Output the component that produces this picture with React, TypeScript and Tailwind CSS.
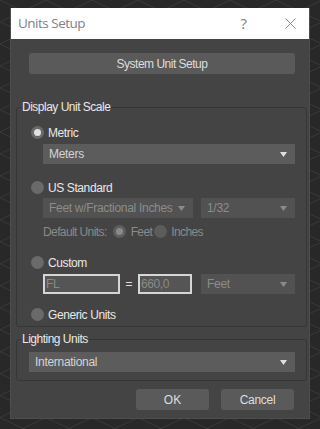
import React from "react";

const font = { fontFamily: '"Liberation Sans", Arial, sans-serif' };

function Radio({ checked, disabled }: { checked?: boolean; disabled?: boolean }) {
  if (checked) {
    return (
      <span
        className={`flex h-[13px] w-[13px] shrink-0 items-center justify-center rounded-full ${
          disabled ? "bg-[#5e5e5e]" : "bg-[#6a6a6a]"
        }`}
      >
        <span className={`h-[7px] w-[7px] rounded-full ${disabled ? "bg-[#8a8a8a]" : "bg-[#e2e2e2]"}`} />
      </span>
    );
  }
  return <span className={`block h-[13px] w-[13px] shrink-0 rounded-full ${disabled ? "bg-[#5c5c5c]" : "bg-[#6a6a6a]"}`} />;
}

function Arrow({ disabled }: { disabled?: boolean }) {
  return (
    <svg width="7" height="5" viewBox="0 0 7 5" className="shrink-0">
      <path d="M0 0 L7 0 L3.5 5 Z" fill={disabled ? "#8a8a8a" : "#e0e0e0"} />
    </svg>
  );
}

function Dropdown({ label, disabled, className }: { label: string; disabled?: boolean; className?: string }) {
  return (
    <div
      className={`flex h-[20px] items-center justify-between pl-[6px] pr-[8px] text-[12px] tracking-[-0.3px] ${
        disabled ? "bg-[#525252] text-[#8c8c8c]" : "bg-[#5c5c5c] text-[#d4d4d4]"
      } ${className ?? ""}`}
    >
      <span>{label}</span>
      <Arrow disabled={disabled} />
    </div>
  );
}

function Background() {
  const lines: React.ReactNode[] = [];
  for (let i = -20; i < 30; i++) {
    const x = i * 46;
    lines.push(<line key={"a" + i} x1={x} y1={0} x2={x + 900} y2={430} stroke="#3a3a3a" strokeWidth="1" />);
    lines.push(<line key={"b" + i} x1={x} y1={0} x2={x - 900} y2={430} stroke="#3a3a3a" strokeWidth="1" />);
  }
  return (
    <svg className="absolute inset-0" width="320" height="429" viewBox="0 0 320 429">
      {lines}
    </svg>
  );
}

export default function App() {
  return (
    <div className="relative h-[429px] w-[320px] overflow-hidden bg-[#282828]" style={font}>
      <Background />
      <div className="absolute left-[10px] top-[8px] flex h-[411px] w-[300px] flex-col border-x border-b border-[#4e4e4e] bg-[#444444]">
        {/* Title bar */}
        <div className="flex h-[31px] shrink-0 items-center bg-white">
          <span
            className="ml-[7px] text-[13.5px] tracking-[-0.5px] text-[#80808c]"
            style={{ fontFamily: '"Open Sans", "Noto Sans", sans-serif' }}
          >
            Units Setup
          </span>
          <span className="ml-auto mr-[38px] text-[15px] text-[#8a8a8a]" style={{ fontFamily: '"Noto Sans", sans-serif' }}>
            ?
          </span>
          <svg width="11" height="11" viewBox="0 0 11 11" className="mr-[13px]">
            <path d="M0.5 0.5 L10.5 10.5 M10.5 0.5 L0.5 10.5" stroke="#8a8a8a" strokeWidth="1" />
          </svg>
        </div>

        {/* System Unit Setup */}
        <div className="ml-[18px] mt-[14px] flex h-[21px] w-[266px] items-center justify-center rounded-[3px] bg-[#5a5a5a] text-[12px] tracking-[-0.5px] text-[#dedede]">
          System Unit Setup
        </div>

        {/* Display Unit Scale group */}
        <div className="relative ml-[5px] mt-[33px] w-[291px] rounded-[3px] border border-[#363636] pb-[5px] pl-[14px] pr-[11px]">
          <span className="absolute -top-[8px] left-[4px] bg-[#444444] px-[1px] text-[12px] leading-[14px] tracking-[-0.5px] text-[#e8e8e8]">
            Display Unit Scale
          </span>
          <div className="mt-[18px] flex h-[13px] items-center gap-[4px] text-[12px] tracking-[-0.4px] text-[#e8e8e8]">
            <Radio checked />
            <span>Metric</span>
          </div>
          <Dropdown label="Meters" className="ml-[12px] mt-[5px]" />

          <div className="mt-[17px] flex h-[13px] items-center gap-[4px] text-[12px] tracking-[-0.4px] text-[#e8e8e8]">
            <Radio />
            <span>US Standard</span>
          </div>
          <div className="ml-[12px] mt-[4px] flex gap-[8px]">
            <Dropdown label="Feet w/Fractional Inches" disabled className="w-[150px]" />
            <Dropdown label="1/32" disabled className="flex-1" />
          </div>
          <div className="ml-[12px] mt-[7px] flex h-[13px] items-center text-[12px] tracking-[-0.6px] text-[#8a8a8a]">
            <span>Default Units:</span>
            <span className="ml-[6px] flex">
              <Radio checked disabled />
            </span>
            <span className="ml-[5px]">Feet</span>
            <span className="ml-[2px] flex">
              <Radio disabled />
            </span>
            <span className="ml-[4px]">Inches</span>
          </div>

          <div className="mt-[18px] flex h-[13px] items-center gap-[4px] text-[12px] tracking-[-0.4px] text-[#e8e8e8]">
            <Radio />
            <span>Custom</span>
          </div>
          <div className="ml-[12px] mt-[5px] flex h-[20px] items-center">
            <div className="flex h-[20px] w-[77px] items-center border-2 border-[#d6d6d6] bg-[#555555] pl-[1px] text-[12px] tracking-[-0.4px] text-[#8a8a8a]">
              FL
            </div>
            <div className="w-[18px] text-center text-[12px] text-[#e0e0e0]">=</div>
            <div className="flex h-[20px] w-[54px] items-center border-2 border-[#d6d6d6] bg-[#555555] pl-[1px] text-[12px] tracking-[-0.4px] text-[#8a8a8a]">
              660,0
            </div>
            <Dropdown label="Feet" disabled className="ml-[9px] flex-1" />
          </div>

          <div className="mt-[14px] flex h-[13px] items-center gap-[4px] text-[12px] tracking-[-0.4px] text-[#e8e8e8]">
            <Radio />
            <span>Generic Units</span>
          </div>
        </div>

        {/* Lighting Units group */}
        <div className="relative ml-[5px] mt-[12px] w-[291px] rounded-[3px] border border-[#363636] pb-[8px] pl-[12px] pr-[11px]">
          <span className="absolute -top-[8px] left-[4px] bg-[#444444] px-[1px] text-[12px] leading-[14px] tracking-[-0.5px] text-[#e8e8e8]">
            Lighting Units
          </span>
          <Dropdown label="International" className="mt-[12px]" />
        </div>

        {/* Buttons */}
        <div className="mr-[15px] mt-[8px] flex justify-end gap-[12px]">
          <div className="flex h-[21px] w-[73px] items-center justify-center rounded-[3px] bg-[#5a5a5a] text-[12px] text-[#dedede]">
            OK
          </div>
          <div className="flex h-[21px] w-[73px] items-center justify-center rounded-[3px] bg-[#5a5a5a] text-[12px] tracking-[-0.3px] text-[#dedede]">
            Cancel
          </div>
        </div>
      </div>
    </div>
  );
}
